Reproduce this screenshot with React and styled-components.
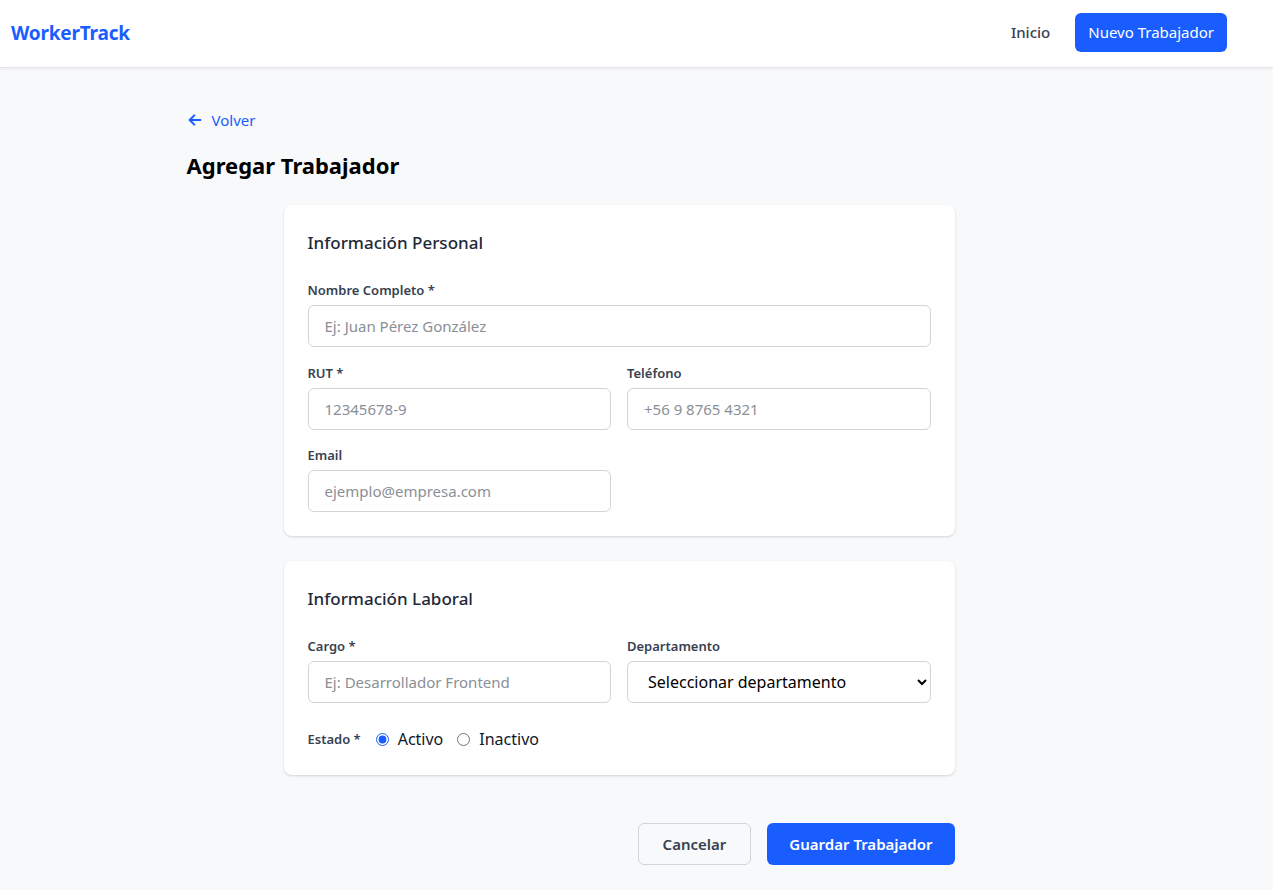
import React from "react";
import styled, { createGlobalStyle } from "styled-components";

const BLUE = "#1a5dff";

const GlobalStyle = createGlobalStyle`
  * { box-sizing: border-box; }
  body {
    margin: 0;
    background: #f8f9fb;
    font-family: "Noto Sans", "Open Sans", sans-serif;
    color: #111827;
  }
`;

const Header = styled.header`
  height: 68px;
  background: #fff;
  border-bottom: 1px solid #e3e5e8;
  box-shadow: 0 1px 3px rgba(0, 0, 0, 0.06);
  display: flex;
  align-items: center;
  justify-content: space-between;
  padding: 0 46px 2px 11px;
`;

const Logo = styled.div`
  color: ${BLUE};
  font-size: 19px;
  font-weight: 700;
  letter-spacing: -0.2px;
`;

const Nav = styled.nav`
  display: flex;
  align-items: center;
  gap: 25px;
  margin-bottom: 1px;
`;

const NavLink = styled.a`
  color: #374151;
  font-size: 15px;
  font-weight: 500;
  text-decoration: none;
`;

const Button = styled.button`
  height: ${(p) => p.$h || 42}px;
  padding: 0 ${(p) => p.$px || 24}px;
  border-radius: 6px;
  font-family: inherit;
  font-size: 15px;
  font-weight: ${(p) => (p.$light ? 400 : 600)};
  cursor: pointer;
  border: ${(p) => (p.$primary ? "none" : "1px solid #d1d5db")};
  background: ${(p) => (p.$primary ? BLUE : "#f8f9fb")};
  color: ${(p) => (p.$primary ? "#fff" : "#374151")};
`;

const Main = styled.main`
  width: 900px;
  margin: 0 auto;
  padding-top: 41px;
  padding-bottom: 24px;
`;

const Back = styled.a`
  display: inline-flex;
  align-items: center;
  gap: 9px;
  color: ${BLUE};
  font-size: 15px;
  text-decoration: none;
  height: 22px;
`;

const Title = styled.h1`
  margin: 17px 0 25px;
  font-size: 22px;
  font-weight: 700;
  color: #000;
  line-height: 30px;
`;

const Form = styled.form`
  width: 671px;
  margin-left: 97px;
  display: flex;
  flex-direction: column;
  gap: 25px;
`;

const Card = styled.section`
  background: #fff;
  border-radius: 8px;
  box-shadow: 0 1px 3px rgba(0, 0, 0, 0.1), 0 1px 2px rgba(0, 0, 0, 0.06);
  padding: 24px;
`;

const CardTitle = styled.h2`
  margin: 0 0 25px;
  font-size: 17px;
  font-weight: 500;
  color: #1f2937;
  line-height: 27px;
`;

const Grid = styled.div`
  display: grid;
  grid-template-columns: ${(p) => (p.$cols === 2 ? "1fr 1fr" : "1fr")};
  column-gap: 16px;
  row-gap: 16px;
  & + & {
    margin-top: 17px;
  }
`;

const Field = styled.div`
  display: flex;
  flex-direction: column;
`;

const Label = styled.label`
  font-size: 13px;
  font-weight: 600;
  color: #374151;
  line-height: 18px;
  margin-bottom: 6px;
`;

const Input = styled.input`
  height: 42px;
  border: 1px solid #d1d5db;
  border-radius: 6px;
  padding: 0 16px;
  font-family: inherit;
  font-size: 15px;
  color: #111827;
  background: #fff;
  outline: none;
  &::placeholder {
    color: #8a8f98;
  }
`;

const Select = styled.select`
  height: 42px;
  border: 1px solid #d1d5db;
  border-radius: 6px;
  padding: 0 8px 0 16px;
  font-family: inherit;
  font-size: 16px;
  color: #000;
  background: #fff;
  outline: none;
`;

const RadioRow = styled.div`
  display: flex;
  align-items: center;
  margin-top: 24px;
  height: 24px;
`;

const RadioLabel = styled.label`
  display: inline-flex;
  align-items: center;
  gap: 9px;
  font-size: 16px;
  color: #111827;
  margin-right: 14px;
  input {
    margin: 0;
    width: 13px;
    height: 13px;
    accent-color: ${BLUE};
  }
`;

const EstadoLabel = styled.span`
  font-size: 13px;
  font-weight: 600;
  color: #374151;
  margin-right: 15px;
`;

const Actions = styled.div`
  display: flex;
  justify-content: flex-end;
  gap: 16px;
  margin-top: 23px;
`;

const ArrowLeft = () => (
  <svg width="16" height="16" viewBox="0 0 24 24" fill="none" stroke="currentColor" strokeWidth="3" strokeLinecap="round" strokeLinejoin="round">
    <path d="M20 12H5" />
    <path d="M11 5l-7 7 7 7" />
  </svg>
);

export default function App() {
  return (
    <>
      <GlobalStyle />
      <Header>
        <Logo>WorkerTrack</Logo>
        <Nav>
          <NavLink href="#">Inicio</NavLink>
          <Button $primary $light $h={39} $px={13} type="button">
            Nuevo Trabajador
          </Button>
        </Nav>
      </Header>
      <Main>
        <Back href="#">
          <ArrowLeft />
          Volver
        </Back>
        <Title>Agregar Trabajador</Title>
        <Form onSubmit={(e) => e.preventDefault()}>
          <Card>
            <CardTitle>Información Personal</CardTitle>
            <Grid>
              <Field>
                <Label>Nombre Completo *</Label>
                <Input placeholder="Ej: Juan Pérez González" />
              </Field>
            </Grid>
            <Grid $cols={2}>
              <Field>
                <Label>RUT *</Label>
                <Input placeholder="12345678-9" />
              </Field>
              <Field>
                <Label>Teléfono</Label>
                <Input placeholder="+56 9 8765 4321" />
              </Field>
              <Field>
                <Label>Email</Label>
                <Input placeholder="ejemplo@empresa.com" />
              </Field>
            </Grid>
          </Card>
          <Card>
            <CardTitle>Información Laboral</CardTitle>
            <Grid $cols={2}>
              <Field>
                <Label>Cargo *</Label>
                <Input placeholder="Ej: Desarrollador Frontend" />
              </Field>
              <Field>
                <Label>Departamento</Label>
                <Select defaultValue="">
                  <option value="">Seleccionar departamento</option>
                </Select>
              </Field>
            </Grid>
            <RadioRow>
              <EstadoLabel>Estado *</EstadoLabel>
              <RadioLabel>
                <input type="radio" name="estado" defaultChecked />
                Activo
              </RadioLabel>
              <RadioLabel>
                <input type="radio" name="estado" />
                Inactivo
              </RadioLabel>
            </RadioRow>
          </Card>
          <Actions>
            <Button type="button">Cancelar</Button>
            <Button $primary $px={22} type="submit">Guardar Trabajador</Button>
          </Actions>
        </Form>
      </Main>
    </>
  );
}
